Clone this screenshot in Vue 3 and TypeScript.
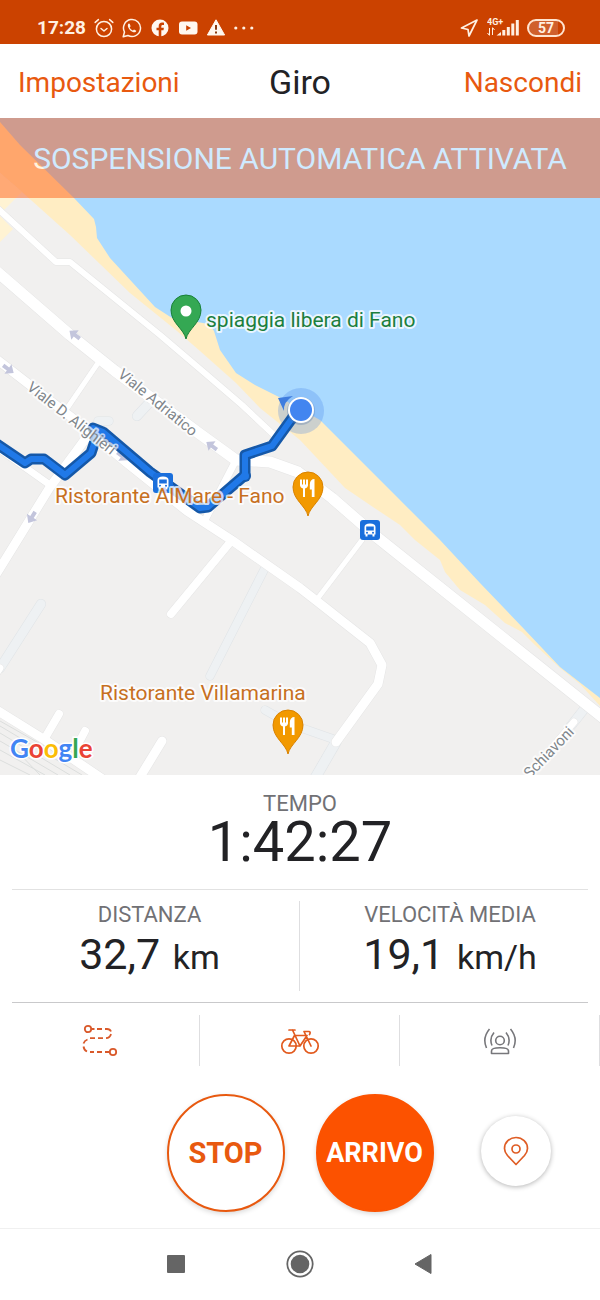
<script setup lang="ts">
interface Metric {
  label: string
  value: string
  unit: string
}

interface Road {
  d: string
  w: number
}

const metrics: Metric[] = [
  { label: 'DISTANZA', value: '32,7', unit: 'km' },
  { label: 'VELOCITÀ MEDIA', value: '19,1', unit: 'km/h' },
]

const paths: Road[] = [
  { d: 'M264 570 210 676', w: 8 },
  { d: 'M41 604 0 668', w: 9 },
  { d: 'M336 742 314 780', w: 10 },
  { d: 'M265 710 290 724 336 740', w: 8 },
  { d: 'M585 708 570 727', w: 9 },
  { d: 'M150 402 137 416', w: 9 },
  { d: 'M98 421H109', w: 8 },
]

const roads: Road[] = [
  { d: 'M-5 206 56 262H70L160 335 200 369 242 405 275 436', w: 6 },
  { d: 'M-5 270 70 335 115 371 200 434 236 460 270 462 298 472 332 498 378 538 606 720', w: 11 },
  { d: 'M-5 358 75 420 127 463 187 511 233 541 300 588 318 602 370 643 382 665 378 684 336 742', w: 9 },
  { d: 'M98 363 68 407', w: 5 },
  { d: 'M92 430 50 487 5 560 -5 576', w: 9 },
  { d: 'M-5 446 50 485', w: 7 },
  { d: 'M236 460 205 520', w: 7 },
  { d: 'M232 540 171 614', w: 8 },
  { d: 'M362 540 318 598', w: 5 },
  { d: 'M-5 709 45 740 104 780', w: 9 },
  { d: 'M59 714 45 738', w: 8 },
  { d: 'M85 731 76 748', w: 8 },
  { d: 'M162 741 137 782', w: 9 },
  { d: 'M-4 674 0 668', w: 7 },
  { d: 'M574 722 520 786', w: 7 },
]

const arrows: string[] = [
  'translate(75 335) rotate(218)',
  'translate(8 369) rotate(36)',
  'translate(212 446) rotate(216)',
  'translate(32 517) rotate(122)',
  'translate(122 456) rotate(38)',
]

const route =
  'M-6 442 25 463 31 459H44L65 475 91 453 97 435 93 428 103 432 150 472 200 508 208 507 245 475V455L272 446 293 417'
</script>

<template>
  <div class="screen">
    <div class="status">
      <div class="status-group">
        <span class="clock">17:28</span>
        <svg class="i20" viewBox="0 0 20 20" fill="none" stroke="#fff0e2" stroke-width="1.5" stroke-linecap="round" stroke-linejoin="round">
          <circle cx="10" cy="11" r="7.6" />
          <path d="M7 10.5 10 13l3-2.5M1.2 4.4 4.4 1.6M18.8 4.4 15.6 1.6" />
        </svg>
        <svg class="i20" viewBox="0 0 20 20" fill="none" stroke="#fff0e2" stroke-width="1.5" stroke-linejoin="round">
          <path d="M1.2 18.8 2.5 14A8.5 8.5 0 1 1 6 17.5Z" />
          <path d="M6.8 5.6c-1 .6-1.3 1.9-.6 3.6 1 2.400 3 4.300 5.200 5 1.500.4 2.600-.2 2.900-1.500l-2.300-1.300-1.100 1.100c-1.400-.6-2.600-1.800-3.200-3.100l.9-1.100-.9-2.500Z" fill="#fff0e2" stroke="none" />
        </svg>
        <svg class="i20" viewBox="0 0 20 20">
          <circle cx="10" cy="10" r="8.500" fill="#fff8f0" />
          <path d="M8.700 19v-6.700H6.500V9.700h2.200V8c0-2.300 1.300-3.500 3.400-3.500.9 0 1.600.1 1.900.2v2.200h-1.300c-1.100 0-1.400.6-1.400 1.400v1.400h2.600l-.4 2.600h-2.200V19Z" fill="#cb4200" />
        </svg>
        <svg class="i20" viewBox="0 0 20 20">
          <rect x="1" y="3.500" width="18.500" height="13" rx="3" fill="#fff8f0" />
          <path d="M8.200 7.200 13 10l-4.800 2.800Z" fill="#cb4200" />
        </svg>
        <svg class="i20" viewBox="0 0 20 20">
          <path d="M10 1.800 18.600 17H1.400Z" fill="#fff8f0" stroke="#fff8f0" stroke-linejoin="round" />
          <path d="M10 7v4.800M10 13.500v2" stroke="#8a3a10" stroke-width="2" />
        </svg>
        <svg class="i20" viewBox="0 0 20 20" fill="#fff0e2">
          <circle cx="1.800" cy="10" r="1.600" /><circle cx="9.800" cy="10" r="1.600" /><circle cx="17.800" cy="10" r="1.600" />
        </svg>
      </div>
      <div class="status-group end">
        <svg class="i20" viewBox="0 0 20 20" fill="none" stroke="#fff0e2" stroke-width="1.700" stroke-linejoin="round">
          <path d="M18 2 2.500 10l6.500 1.500L10 18Z" />
        </svg>
        <svg class="signal" viewBox="0 0 32 20" fill="#fff0e2">
          <text x="0" y="7" class="net">4G+</text>
          <path d="M2.500 10v7M.5 15l2 2.500M5.500 17v-7M7.500 12l-2-2.500" fill="none" stroke="#fff0e2" />
          <path d="M9.500 17.500 14 14v3.500ZM15.300 12h3v5.500h-3ZM19.800 9h3v8.500h-3ZM24.300 5.500h3v12h-3ZM28.800 2h3v15.500h-3Z" />
        </svg>
        <span class="battery">57</span>
      </div>
    </div>

    <header class="top">
      <button class="link" type="button">Impostazioni</button>
      <h1>Giro</h1>
      <button class="link right" type="button">Nascondi</button>
    </header>

    <section class="map-wrap">
      <svg class="map" viewBox="0 118 600 657" role="img" aria-label="Mappa">
        <defs>
          <g id="food">
            <path d="M0 22C-2 12-15 6-15-7A15 15 0 0 1 15-7C15 6 2 12 0 22Z" fill="#f29900" stroke="#d98200" />
            <path d="M-7-14.500v6M-4-14.500V3M-1-14.500v6" fill="none" stroke="#fff" stroke-width="2" />
            <path d="M-8-9.500h8q0 4-4 4t-4-4Z" fill="#fff" />
            <path d="M6.500-15V3H3.800V-4.500H1.800v-5Q2-15 6.500-15Z" fill="#fff" />
          </g>
          <g id="bus">
            <rect x="-10" y="-10" width="20" height="20" rx="3" fill="#1a6fdc" />
            <path d="M-5.500 4.500V-3Q-5.500-6.500 0-6.500T5.500-3V4.500H4.500V6.500H2.500V4.500h-5V6.500h-2V4.500Z" fill="#fff" />
            <path d="M-3.800-3.500h7.600V.5h-7.600Z" fill="#1a6fdc" />
            <circle cx="-3" cy="2.700" r="1" fill="#1a6fdc" /><circle cx="3" cy="2.700" r="1" fill="#1a6fdc" />
          </g>
        </defs>
        <rect y="118" width="600" height="657" fill="#aadaff" />
        <path d="M0 122 20 145 74 198 94 219 96 227 97 238 110 258 155 307 172 318 197 322 209 324 214 331 220 350 236 373 255 385 279 397 320 420 345 445 400 500 440 540 480 583 525 630 560 667 600 698V775H0Z" fill="#ffedc3" />
        <path d="M0 173 22 192 70 235 130 293 177 331 200 351 236 383 260 408 300 440 345 488 370 505 400 525 415 540 440 560 445 572 460 590 485 605 505 623 522 632 535 645 560 668 580 684 600 706V775H0Z" fill="#f1f0ef" />
        <path d="M0 173 22 192 0 214ZM0 216 13 229 0 242Z" fill="#fff3d3" />
        <g fill="none" stroke="#dcdedd" stroke-width="1">
          <path d="M0 721 95 775M0 726 82 775M0 733 70 775M0 741 58 775M0 750 45 775M0 760 30 775M14 748 40 775" />
        </g>
        <g fill="none" stroke-linecap="round" stroke-linejoin="round">
          <path v-for="(p, i) in paths" :key="'e' + i" :d="p.d" stroke="#dfe3e6" :stroke-width="p.w + 1" />
          <path v-for="(p, i) in paths" :key="'p' + i" :d="p.d" stroke="#eef1f3" :stroke-width="p.w" />
          <path v-for="(r, i) in roads" :key="'s' + i" :d="r.d" stroke="#e5e5e5" :stroke-width="r.w + 1" />
          <path v-for="(r, i) in roads" :key="'r' + i" :d="r.d" stroke="#fff" :stroke-width="r.w" />
        </g>
        <path v-for="a in arrows" :key="a" :transform="a" d="M-6-2H0V-6L7 0 0 6V2H-6Z" fill="#c3c5dc" />

        <circle cx="301" cy="411" r="23" fill="#4180e8" fill-opacity=".27" />
        <g fill="none" stroke-linejoin="round" stroke-linecap="round">
          <path :d="route" stroke="#1558a8" stroke-width="11" />
          <circle cx="245" cy="476" r="6" fill="#1558a8" />
          <path :d="route" stroke="#2079e8" stroke-width="6" />
          <circle cx="245" cy="476" r="4" fill="#2079e8" />
        </g>
        <path d="M278 398 293 396Q283 402 284 411Z" fill="#3f7ddf" />
        <circle cx="301" cy="411" r="14" fill="#5a7ba8" fill-opacity=".35" />
        <circle cx="301" cy="410" r="13" fill="#fff" />
        <circle cx="301" cy="410" r="11" fill="#4285f0" />

        <use href="#bus" x="163" y="483" />
        <use href="#bus" x="370" y="530" />
        <path d="M186 339C184 329 171 323 171 310A15 15 0 0 1 201 310C201 323 188 329 186 339Z" fill="#34a853" stroke="#188038" />
        <circle cx="186" cy="311" r="5.500" fill="#fff" />
        <use href="#food" x="308" y="494" />
        <use href="#food" x="288" y="732" />

        <text class="place green" x="206" y="327">spiaggia libera di Fano</text>
        <text class="place amber" x="55" y="503">Ristorante AlMare - Fano</text>
        <text class="place amber" x="100" y="700">Ristorante Villamarina</text>
        <text class="street" transform="translate(117 376) rotate(39)">Viale Adriatico</text>
        <text class="street" transform="translate(26 389) rotate(38)">Viale D. Alighieri</text>
        <text class="street" transform="translate(530 779) rotate(-46)">Schiavoni</text>
        <text class="brand" x="10" y="758"><tspan fill="#4285f4">G</tspan><tspan fill="#ea4335">o</tspan><tspan fill="#fbbc05">o</tspan><tspan fill="#4285f4">g</tspan><tspan fill="#34a853">l</tspan><tspan fill="#ea4335">e</tspan></text>
      </svg>
      <div class="banner" role="status">SOSPENSIONE AUTOMATICA ATTIVATA</div>
    </section>

    <section class="time">
      <div class="label">TEMPO</div>
      <div class="big">1:42:27</div>
    </section>
    <section class="metrics">
      <div v-for="m in metrics" :key="m.label" class="metric">
        <div class="label">{{ m.label }}</div>
        <div class="value">{{ m.value }} <span class="unit">{{ m.unit }}</span></div>
      </div>
    </section>

    <div class="tools">
      <button type="button" aria-label="Percorsi">
        <svg width="36" height="36" viewBox="0 0 36 36" fill="none" stroke="#d9592a" stroke-width="1.800">
          <circle cx="6" cy="6" r="3.200" /><circle cx="31" cy="29" r="3.200" />
          <path d="M9.500 6h3M15 6h5M23 6h2q3 0 4 2.500M29 11q-1 4-5 4.200M21 15.200h-5M13 15.200H8M5.500 16.500Q2.500 17.500 1.500 20.500M1.500 23.500Q2 27 5 28.500M8 29h4M15 29h5M23 29h4" />
        </svg>
      </button>
      <button type="button" aria-label="Sport">
        <svg width="40" height="36" viewBox="0 0 40 36" fill="none" stroke="#e25a1e" stroke-width="1.700" stroke-linejoin="round" stroke-linecap="round">
          <circle cx="9" cy="23" r="7.200" /><circle cx="31" cy="23" r="7.200" />
          <path d="M9 23H20L27 12.500H14.500ZM12.500 7 20 23M9 7H15M31 23 24 8.500H29Q31 9 29.500 11.500" />
        </svg>
      </button>
      <button type="button" aria-label="Beacon">
        <svg width="34" height="36" viewBox="0 0 34 36" fill="none" stroke="#77777b" stroke-width="1.600" stroke-linejoin="round">
          <circle cx="17" cy="17.500" r="4.300" />
          <path d="M8.500 30.500V28Q8.500 24.800 17 24.800T25.500 28V30.500ZM6.500 6Q-1 15 3.500 25M27.500 6Q35 15 30.500 25M11 9.500Q6 15.500 9 22.500M23 9.500Q28 15.500 25 22.500" />
        </svg>
      </button>
    </div>

    <div class="actions">
      <div class="main-actions">
        <button class="round stop" type="button">STOP</button>
        <button class="round finish" type="button">ARRIVO</button>
      </div>
      <button class="locate" type="button" aria-label="Posizione">
        <svg width="26" height="30" viewBox="0 0 26 30" fill="none" stroke="#df5d25" stroke-width="1.700" stroke-linejoin="round">
          <path d="M13 28.500 4.500 19.500Q1.500 16 1.500 12.500A11.500 11 0 0 1 24.500 12.500Q24.500 16 21.500 19.500Z" />
          <circle cx="13" cy="13" r="4" />
        </svg>
      </button>
    </div>

    <nav class="nav">
      <button type="button" aria-label="Recenti">
        <svg width="28" height="28" viewBox="0 0 28 28"><rect x="5" y="5" width="18" height="18" rx="1" fill="#656565" /></svg>
      </button>
      <button type="button" aria-label="Home">
        <svg width="28" height="28" viewBox="0 0 28 28"><circle cx="14" cy="14" r="12.700" fill="none" stroke="#656565" stroke-width="1.800" /><circle cx="14" cy="14" r="9.300" fill="#656565" /></svg>
      </button>
      <button type="button" aria-label="Indietro">
        <svg width="28" height="28" viewBox="0 0 28 28"><path d="M5 14 21 4.500V23.500Z" fill="#656565" stroke="#656565" stroke-linejoin="round" /></svg>
      </button>
    </nav>
  </div>
</template>

<style>
body {
  margin: 0;
  background: #fff;
}
</style>

<style scoped>
.screen {
  display: flex;
  flex-direction: column;
  min-height: 100vh;
  background: #fff;
  color: #222225;
  font-family: Roboto, "Liberation Sans", sans-serif;
}
button {
  display: flex;
  align-items: center;
  justify-content: center;
  padding: 0;
  border: 0;
  background: none;
  font-family: inherit;
  cursor: pointer;
}
svg {
  display: block;
}
.status {
  display: flex;
  justify-content: space-between;
  box-sizing: border-box;
  height: 44px;
  padding: 11px 35px 0 37px;
  background: #cb4200;
  color: #fff0e2;
}
.status-group {
  display: flex;
  align-items: center;
  height: 33px;
  gap: 8px;
}
.i20 {
  width: 20px;
  height: 20px;
}
.clock {
  font-size: 19px;
  font-weight: 700;
}
.signal {
  width: 32px;
  height: 20px;
}
.net {
  font-size: 9px;
  font-weight: 700;
}
.battery {
  box-sizing: border-box;
  width: 38px;
  height: 18px;
  border: 2px solid #ffe4d0;
  border-radius: 9px;
  background: linear-gradient(90deg, #d0602c 0 86%, #cb4200 86%);
  font-size: 14px;
  font-weight: 700;
  line-height: 14px;
  text-align: center;
}
.top {
  display: grid;
  grid-template-columns: 1fr auto 1fr;
  align-items: center;
  box-sizing: border-box;
  height: 74px;
  padding: 2px 18px 0;
}
h1 {
  margin: 0;
  font-size: 34px;
  font-weight: 400;
  line-height: 40px;
}
.link {
  justify-self: start;
  color: #e8590f;
  font-size: 28px;
}
.right {
  justify-self: end;
}
.map-wrap {
  position: relative;
}
.map {
  width: 100%;
  height: auto;
}
.banner {
  position: absolute;
  inset: 0 0 auto;
  padding-top: 2px;
  background: #ff4d00;
  color: #fff;
  font-size: 30px;
  line-height: 78px;
  text-align: center;
  white-space: nowrap;
  opacity: 0.44;
}
.place {
  font-size: 21px;
  stroke: #fff;
  stroke-width: 4px;
  stroke-linejoin: round;
  stroke-opacity: 0.75;
  paint-order: stroke;
}
.green {
  fill: #1c7f3e;
}
.amber {
  fill: #c7701f;
}
.street {
  fill: #80868b;
  font-size: 15px;
  stroke: #fff;
  stroke-width: 4px;
  stroke-linejoin: round;
  stroke-opacity: 0.7;
  paint-order: stroke;
}
.brand {
  font-family: Lato, sans-serif;
  font-size: 26px;
  font-weight: 700;
  stroke: #fff;
  stroke-width: 3px;
  paint-order: stroke;
}
.time {
  height: 97px;
  margin: 0 12px;
  padding-top: 17px;
  border-bottom: 1px solid #e2e2e2;
  text-align: center;
}
.label {
  color: #717175;
  font-size: 22px;
  line-height: 24px;
}
.big {
  font-size: 56px;
  line-height: 52px;
}
.metrics {
  display: grid;
  grid-template-columns: 1fr 1fr;
  margin: 0 12px;
  padding: 11px 0;
  border-bottom: 1px solid #c9c9cb;
}
.metric {
  height: 90px;
  padding-left: 12px;
  text-align: center;
}
.metric:first-child {
  padding: 0 12px 0 0;
  border-right: 1px solid #dedee0;
}
.metric .label {
  line-height: 28px;
}
.value {
  font-size: 43px;
  line-height: 50px;
}
.unit {
  margin-left: 2px;
  font-size: 34px;
}
.tools {
  display: grid;
  grid-template-columns: repeat(3, 1fr);
  margin-top: 12px;
}
.tools button {
  height: 51px;
  border-right: 1px solid #dedee0;
}
.actions {
  display: grid;
  grid-template-columns: 1fr auto 1fr;
  align-items: center;
  margin-top: 28px;
}
.main-actions {
  display: flex;
  grid-column: 2;
  gap: 31px;
}
.round {
  box-sizing: border-box;
  width: 118px;
  height: 118px;
  border: 2px solid #e8590f;
  border-radius: 50%;
  background: #fff;
  box-shadow: 0 2px 5px rgba(0, 0, 0, 0.15);
  color: #e8590f;
  font-size: 29px;
  font-weight: 700;
}
.finish {
  border-color: #fc5200;
  background: #fc5200;
  color: #fff;
  font-size: 27px;
}
.locate {
  justify-self: end;
  width: 70px;
  height: 70px;
  margin: 0 49px 4px 0;
  border-radius: 50%;
  background: #fff;
  box-shadow: 0 1px 5px rgba(0, 0, 0, 0.3);
}
.nav {
  display: flex;
  flex: 1;
  align-items: center;
  justify-content: center;
  gap: 96px;
  margin-top: 16px;
  padding-bottom: 2px;
  border-top: 1px solid #f0f0f0;
}
</style>
